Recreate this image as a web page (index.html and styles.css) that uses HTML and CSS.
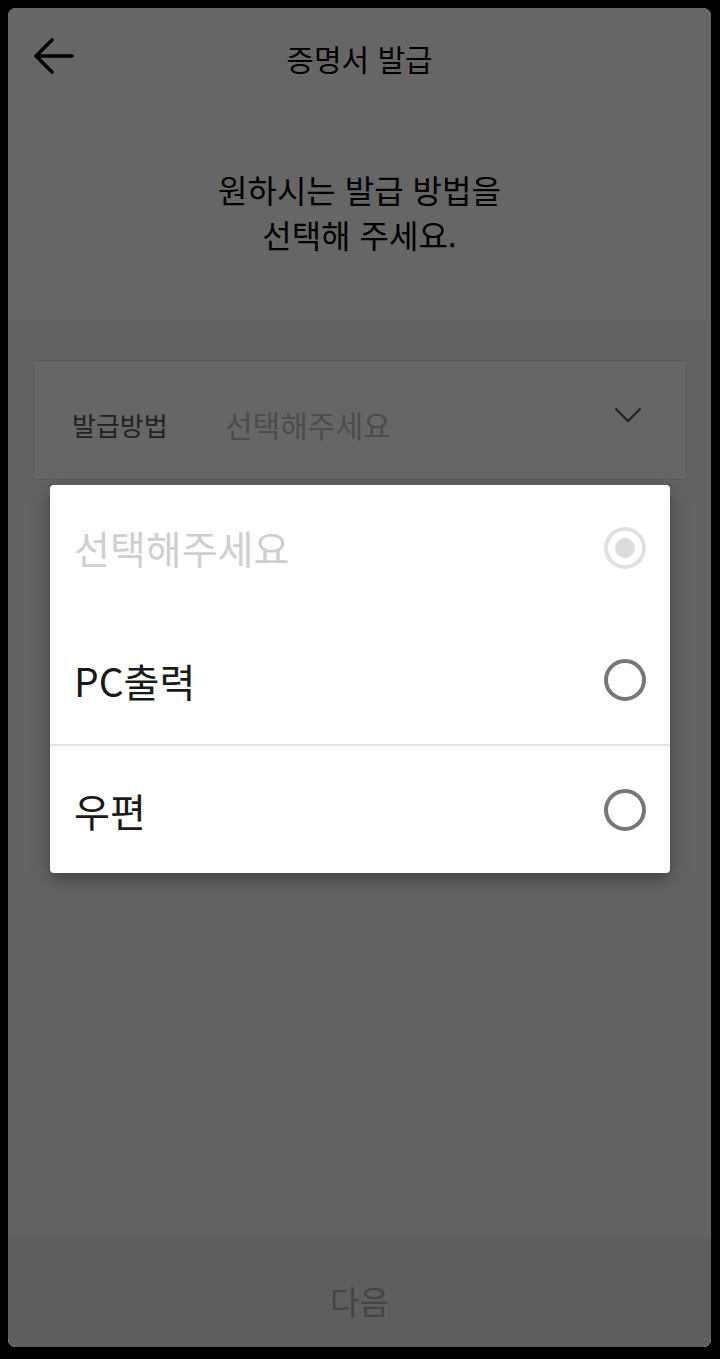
FILE: index.html
```html
<!DOCTYPE html>
<html lang="ko">
<head>
    <meta charset="utf-8">
    <title>증명서 발급</title>
    <link rel="stylesheet" href="styles.css">
</head>
<body>
<div class="screen">
    <div class="header">
        <button class="back-button" aria-label="뒤로">
            <svg width="42" height="40" viewBox="0 0 42 40">
                <path d="M40 19 H4 M20 3 L4 19 L20 35" fill="none" stroke="#000" stroke-width="3.6" stroke-linecap="round" stroke-linejoin="round"/>
            </svg>
        </button>
        <h1>증명서 발급</h1>
    </div>

    <div class="intro">
        <p>원하시는 발급 방법을<br>선택해 주세요.</p>
    </div>

    <div class="content">
        <div class="select-box">
            <span class="select-label">발급방법</span>
            <span class="select-value">선택해주세요</span>
            <svg class="chevron" width="28" height="16" viewBox="0 0 28 16">
                <path d="M2 2 L14 14 L26 2" fill="none" stroke="#555" stroke-width="2.2" stroke-linecap="round" stroke-linejoin="round"/>
            </svg>
        </div>
    </div>

    <div class="footer">
        <span>다음</span>
    </div>

    <!-- 선택 팝업 -->
    <div class="scrim"></div>
    <div class="dialog">
        <div class="option option-disabled">
            <span>선택해주세요</span>
            <span class="radio radio-checked"></span>
        </div>
        <div class="option">
            <span>PC출력</span>
            <span class="radio"></span>
        </div>
        <div class="option option-divided">
            <span>우편</span>
            <span class="radio"></span>
        </div>
    </div>
</div>
</body>
</html>
```

FILE: styles.css
```css
/* 기본 스타일 */
body {
    margin: 0;
    padding: 0;
    background-color: #000;
    font-family: "Noto Sans CJK KR", "Noto Sans", sans-serif;
}

.screen {
    position: relative;
    margin: 8px 9px 12px 8px;
    height: 1339px;
    background-color: #fff;
    border-radius: 8px;
    overflow: hidden;
    display: flex;
    flex-direction: column;
}

/* 헤더 */
.header {
    height: 100px;
    display: flex;
    align-items: center;
    justify-content: center;
    position: relative;
    flex-shrink: 0;
}

.header h1 {
    margin: 0;
    font-size: 30px;
    font-weight: 400;
    color: #000;
    line-height: 40px;
}

.back-button {
    position: absolute;
    left: 24px;
    top: 29px;
    padding: 0;
    border: none;
    background: none;
    width: 42px;
    height: 40px;
}

/* 안내 문구 */
.intro {
    height: 212px;
    flex-shrink: 0;
    display: flex;
    align-items: center;
    justify-content: center;
}

.intro p {
    margin: 0 0 4px 0;
    text-align: center;
    font-size: 32px;
    line-height: 45px;
    color: #000;
}

/* 선택 영역 */
.content {
    flex-grow: 1;
    background-color: #f8f8f8;
    padding: 40px 24px 0 25px;
}

.select-box {
    height: 118px;
    background-color: #fff;
    border: 1px solid #e2e2e2;
    display: flex;
    align-items: center;
    padding: 0 44px 0 38px;
}

.select-label {
    width: 153px;
    font-size: 26px;
    color: #555;
    margin-top: 8px;
}

.select-value {
    flex-grow: 1;
    font-size: 30px;
    color: #bbb;
    margin-top: 8px;
}

.chevron {
    margin-top: -10px;
}

/* 하단 버튼 */
.footer {
    height: 109px;
    flex-shrink: 0;
    background-color: #ececec;
    display: flex;
    align-items: center;
    justify-content: center;
    box-shadow: 0 -3px 6px rgba(0, 0, 0, 0.04);
}

.footer span {
    font-size: 32px;
    color: #aaa;
    margin-top: 14px;
}

/* 팝업 */
.scrim {
    position: absolute;
    top: 0;
    left: 0;
    right: 0;
    bottom: 0;
    background-color: rgba(0, 0, 0, 0.6);
}

.dialog {
    position: absolute;
    left: 42px;
    top: 477px;
    width: 620px;
    background-color: #fff;
    border-radius: 4px;
    box-shadow: 0 6px 18px rgba(0, 0, 0, 0.35);
}

.option {
    height: 129px;
    display: flex;
    align-items: center;
    justify-content: space-between;
    padding: 0 24px 0 24px;
    font-size: 39px;
    color: #1a1a1a;
}

.option:first-child {
    height: 130px;
    align-items: flex-start;
}

.option:first-child span:first-child {
    margin-top: 34px;
}

.option:first-child .radio {
    margin-top: 42px;
}

.option-disabled {
    color: #cfcfcf;
}

.option-divided {
    border-top: 2px solid #e3e3e3;
    height: 127px;
}

.radio {
    width: 34px;
    height: 34px;
    border: 4px solid #777;
    border-radius: 50%;
    position: relative;
}

.radio-checked {
    border-color: #e0e0e0;
}

.radio-checked::after {
    content: "";
    position: absolute;
    top: 7px;
    left: 7px;
    width: 20px;
    height: 20px;
    border-radius: 50%;
    background-color: #dcdcdc;
}
```
